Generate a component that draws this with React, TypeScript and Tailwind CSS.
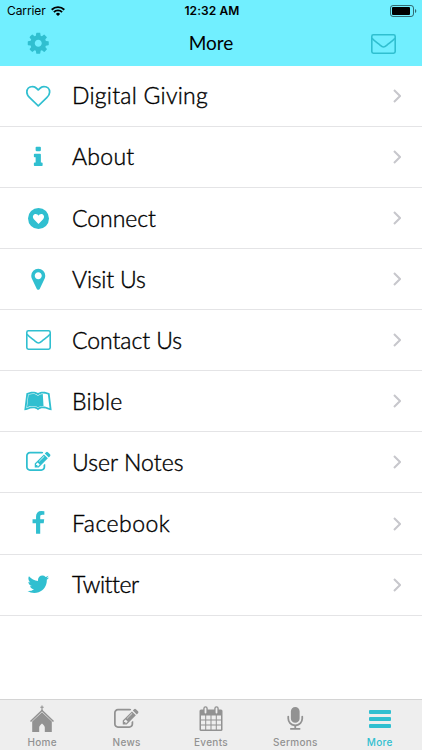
import { FC } from "react";
import { FaLeanpub } from "react-icons/fa";

type IconProps = { className?: string; d: string };

// All glyph paths are drawn on a 1792 unit grid
const Icon: FC<IconProps> = ({ className = "size-[24.5px]", d }) => (
  <svg viewBox="0 0 1792 1792" fill="currentColor" className={`shrink-0 overflow-visible ${className}`}>
    <path d={d} />
  </svg>
);

const COG =
  "M1152 896q0-106-75-181t-181-75-181 75-75 181 75 181 181 75 181-75 75-181zm512-109v222q0 12-8 23t-20 13l-185 28q-19 54-39 91 35 50 107 138 10 12 10 25t-9 23q-27 37-99 108t-94 71q-12 0-26-9l-138-108q-44 23-91 38-16 136-29 186-7 28-36 28h-222q-14 0-24.500-8.500t-11.500-21.500l-28-184q-49-16-90-37l-141 107q-10 9-25 9-14 0-25-11-126-114-165-168-7-10-7-23 0-12 8-23 15-21 51-66.500t54-70.500q-27-50-41-99l-183-27q-13-2-21-12.500t-8-23.500v-222q0-12 8-23t19-13l186-28q14-46 39-92-40-57-107-138-10-12-10-24 0-10 9-23 26-36 98.500-107.500t94.500-71.500q13 0 26 10l138 107q44-23 91-38 16-136 29-186 7-28 36-28h222q14 0 24.500 8.500t11.500 21.500l28 184q49 16 90 37l142-107q9-9 24-9 13 0 25 10 129 119 165 170 7 8 7 22 0 12-8 23-15 21-51 66.500t-54 70.500q26 50 41 98l183 28q13 2 21 12.500t8 23.500z";
const HEART =
  "M1664 596q0-81-21.500-143t-55-98.500-81.500-59.500-94-31-98-8-112 25.500-110.500 64-86.500 72-60 61.500q-18 22-49 22t-49-22q-24-28-60-61.500t-86.500-72-110.500-64-112-25.500-98 8-94 31-81.500 59.500-55 98.500-21.500 143q0 168 187 355l581 560 580-559q188-188 188-356zm128 0q0 221-229 450l-623 600q-18 18-44 18t-44-18l-624-602q-10-8-27.500-26t-55.500-65.500-68-97.500-53.500-121-23.500-138q0-220 127-344t351-124q62 0 126.500 21.500t120 58 95.500 68.500 76 68q36-36 76-68t95.500-68.500 120-58 126.500-21.500q224 0 351 124t127 344z";
const INFO =
  "M1216 1344v128q0 26-19 45t-45 19h-512q-26 0-45-19t-19-45v-128q0-26 19-45t45-19h64v-384h-64q-26 0-45-19t-19-45v-128q0-26 19-45t45-19h384q26 0 45 19t19 45v576h64q26 0 45 19t19 45zm-128-1152v192q0 26-19 45t-45 19h-256q-26 0-45-19t-19-45v-192q0-26 19-45t45-19h256q26 0 45 19t19 45z";
const MARKER =
  "M1152 640q0-106-75-181t-181-75-181 75-75 181 75 181 181 75 181-75 75-181zm256 0q0 109-33 179l-364 774q-16 33-47.500 52t-67.500 19-67.500-19-46.500-52l-365-774q-33-70-33-179 0-212 150-362t362-150 362 150 150 362z";
const EDIT =
  "M888 1184l116-116-152-152-116 116v56h96v96h56zm440-720q-16-16-33 1l-350 350q-17 17-1 33t33-1l350-350q17-17 1-33zm80 594v190q0 119-84.500 203.500t-203.500 84.500h-832q-119 0-203.500-84.500t-84.500-203.500v-832q0-119 84.500-203.500t203.500-84.500h832q63 0 117 25 15 7 18 23 3 17-9 29l-49 49q-14 14-32 8-23-6-45-6h-832q-66 0-113 47t-47 113v832q0 66 47 113t113 47h832q66 0 113-47t47-113v-126q0-13 9-22l64-64q15-15 35-7t20 29zm-96-738l288 288-672 672h-288v-288zm444 132l-92 92-288-288 92-92q28-28 68-28t68 28l152 152q28 28 28 68t-28 68z";
const FACEBOOK =
  "M1343 12v264h-157q-86 0-116 36t-30 108v189h293l-39 296h-254v759h-306v-759h-255v-296h255v-218q0-186 104-288.500t277-102.500q147 0 228 12z";
const TWITTER =
  "M1684 408q-67 98-162 167 1 14 1 42 0 130-38 259.500t-115.500 248.500-184.500 210.500-258 146-323 54.500q-271 0-496-145 35 4 78 4 225 0 401-138-105-2-188-64.500t-114-159.500q33 5 61 5 43 0 85-11-112-23-185.500-111.500t-73.500-205.500v-4q68 38 146 41-66-44-105-115t-39-154q0-88 44-163 121 149 294.500 238.500t371.500 99.500q-8-38-8-74 0-134 94.500-228.500t228.500-94.500q140 0 236 102 109-21 205-78-37 115-142 178 93-10 186-50z";
const MIC =
  "M1472 704v128q0 221-147.500 384.500t-364.500 187.500v132h256q26 0 45 19t19 45-19 45-45 19h-640q-26 0-45-19t-19-45 19-45 45-19h256v-132q-217-24-364.500-187.500t-147.500-384.500v-128q0-26 19-45t45-19 45 19 19 45v128q0 185 131.500 316.500t316.500 131.500 316.500-131.500 131.500-316.500v-128q0-26 19-45t45-19 45 19 19 45zm-256-384v512q0 132-94 226t-226 94-226-94-94-226v-512q0-132 94-226t226-94 226 94 94 226z";

const Envelope: FC<{ className: string }> = ({ className }) => (
  <svg viewBox="0 0 25 20" fill="none" stroke="currentColor" strokeWidth="1.6" className={className}>
    <rect x="0.8" y="0.8" width="23.400" height="18.400" rx="1.600" />
    <path d="M1 4.200c2 2.300 4.500 4 7 6 1.600 1.300 2.800 2.800 4.500 2.800s2.900-1.500 4.500-2.800c2.500-2 5-3.700 7-6" />
  </svg>
);

const HeartBadge = () => (
  <svg viewBox="0 0 21 21" className="size-[21px]">
    <circle cx="10.500" cy="10.500" r="10.500" fill="currentColor" />
    <path d="M10.500 16 5.900 11.200C3.800 8.700 5.400 6 7.700 6c1.300 0 2.300.8 2.800 1.800C11 6.800 12 6 13.300 6c2.300 0 3.900 2.700 1.800 5.200Z" fill="#fff" />
  </svg>
);

const Church = () => (
  <svg viewBox="0 0 26 28" className="w-[26px] h-7">
    <path d="M13 .5v5.500M11.300 2.300h3.400" stroke="currentColor" strokeWidth="1.100" />
    <path d="M1.500 16.500 13 5.500l11.500 11" fill="none" stroke="currentColor" strokeWidth="1.500" />
    <path d="M13 7.200 22.800 16.500V27H15.800v-4.500c0-1.500-1.300-2.800-2.800-4-1.500 1.200-2.800 2.500-2.800 4V27H3.200V16.500Z" fill="currentColor" />
  </svg>
);

const Calendar = () => (
  <svg viewBox="0 0 24 26" className="w-6 h-[26px]">
    <path d="M2 3.500h20q1.500 0 1.500 1.500v18.500q0 1.500-1.500 1.500H2Q.5 25 .5 23.500V5Q.5 3.500 2 3.500Z" fill="currentColor" />
    <path d="M2 9.500h4.200v4H2zM7.200 9.500h4.300v4H7.200zM12.500 9.500h4.300v4h-4.300zM17.800 9.500H22v4h-4.200zM2 14.500h4.200v4H2zM7.200 14.500h4.300v4H7.200zM12.500 14.500h4.300v4h-4.300zM17.800 14.500H22v4h-4.200zM2 19.500h4.200v4H2zM7.200 19.500h4.300v4H7.200zM12.500 19.500h4.300v4h-4.300zM17.800 19.500H22v4h-4.200z" fill="#eee" />
    <path d="M6.500 2.500v4M17.500 2.500v4" stroke="currentColor" strokeWidth="4.500" strokeLinecap="round" />
    <path d="M6.500 2.500v4M17.500 2.500v4" stroke="#eee" strokeWidth="1.800" strokeLinecap="round" />
  </svg>
);

const Bars = () => (
  <svg viewBox="0 0 22 18" fill="currentColor" className="w-[22px] h-[18px]">
    <rect y="0" width="22" height="4" rx="1" />
    <rect y="7" width="22" height="4" rx="1" />
    <rect y="14" width="22" height="4" rx="1" />
  </svg>
);

const rows = [
  { label: "Digital Giving", tracking: "tracking-[0.25px]", icon: <Icon d={HEART} /> },
  { label: "About", tracking: "tracking-[0.3px]", icon: <Icon d={INFO} /> },
  { label: "Connect", tracking: "tracking-[-0.05px]", icon: <HeartBadge /> },
  { label: "Visit Us", tracking: "tracking-[-0.2px]", icon: <Icon d={MARKER} /> },
  { label: "Contact Us", tracking: "tracking-[-0.05px]", icon: <Envelope className="w-[25px] h-5" /> },
  { label: "Bible", tracking: "tracking-[0.3px]", icon: <FaLeanpub className="size-7" /> },
  { label: "User Notes", tracking: "tracking-[0.05px]", icon: <Icon d={EDIT} /> },
  { label: "Facebook", tracking: "tracking-[0.5px]", icon: <Icon d={FACEBOOK} /> },
  { label: "Twitter", tracking: "tracking-[-0.45px]", icon: <Icon d={TWITTER} /> },
];

const tabs = [
  { label: "Home", icon: <Church /> },
  { label: "News", icon: <Icon d={EDIT} /> },
  { label: "Events", icon: <Calendar /> },
  { label: "Sermons", icon: <Icon d={MIC} /> },
  { label: "More", icon: <Bars />, active: true },
];

const StatusBar = () => (
  <div className="grid grid-cols-3 items-center h-[22px] pl-[7px] pr-[5px] font-['Inter',sans-serif] text-[12px] text-black">
    <div className="flex items-center gap-[5px]">
      <span className="tracking-[-0.1px]">Carrier</span>
      <svg viewBox="0 0 14 10" fill="none" stroke="currentColor" strokeWidth="1.900" className="w-[14px] h-[10px]">
        <path d="M.7 3.700a9 9 0 0 1 12.600 0M2.900 6.100a5.800 5.800 0 0 1 8.200 0" />
        <path d="M7 10 4.900 7.900a3 3 0 0 1 4.200 0Z" fill="currentColor" stroke="none" />
      </svg>
    </div>
    <span className="text-center font-semibold whitespace-nowrap tracking-[0.1px]">12:32 AM</span>
    <svg viewBox="0 0 27 12" className="w-[27px] h-3 justify-self-end">
      <rect x=".5" y=".5" width="23" height="11" rx="2.500" fill="none" stroke="#000" strokeOpacity=".55" />
      <rect x="2" y="2" width="18" height="8" rx="1" />
      <path d="M25 4v4q1.300-.5 1.300-2T25 4Z" fillOpacity=".55" />
    </svg>
  </div>
);

const App = () => {
  return (
    <div className="w-full h-[750px] flex flex-col bg-white overflow-hidden font-['Lato',sans-serif]">
      <header className="h-[65.8px] shrink-0 bg-[#71efff]">
        <StatusBar />
        <div className="h-[43px] grid grid-cols-3 items-center px-[25.5px] text-[#30bfd0]">
          <Icon d={COG} />
          <h1 className="text-center text-[19px] text-black">More</h1>
          <Envelope className="w-[25px] h-5 justify-self-end" />
        </div>
      </header>

      <main className="flex-1">
        {rows.map(({ label, tracking, icon }) => (
          <div key={label} className="h-[61.1px] flex items-center border-b border-[#e4e4e6]">
            <div className="w-[76px] -mr-1 flex justify-center text-[#30bfd0]">{icon}</div>
            <span className={`flex-1 text-[23px] leading-none font-light text-black [-webkit-text-stroke:0.4px_#000] ${tracking}`}>
              {label}
            </span>
            <svg viewBox="0 0 8 14" fill="none" stroke="#c7c7cc" strokeWidth="2" className="w-2 h-[14px] mr-[21px]">
              <path d="m1 1 6 6-6 6" />
            </svg>
          </div>
        ))}
      </main>

      <nav className="h-[51px] shrink-0 grid grid-cols-5 bg-[#eee] border-t border-[#d4d4d4] font-['Inter',sans-serif] text-[10px] font-medium tracking-[0.3px]">
        {tabs.map(({ label, icon, active }) => (
          <div key={label} className={`flex flex-col items-center ${active ? "text-[#30bfd0]" : "text-[#929292]"}`}>
            <div className="h-[36px] pt-0.5 flex items-center justify-center">{icon}</div>
            <span className="leading-[13px]">{label}</span>
          </div>
        ))}
      </nav>
    </div>
  );
};

export default App;
